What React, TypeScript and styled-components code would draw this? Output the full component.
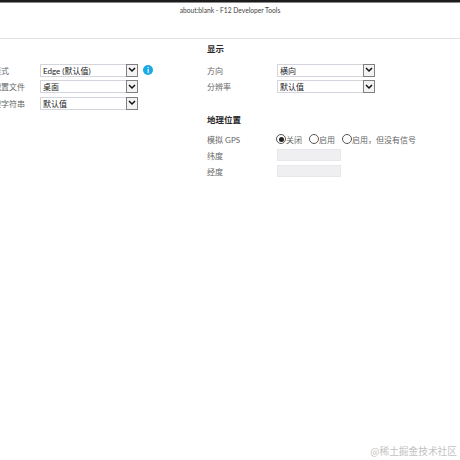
import React from 'react';
import styled, { createGlobalStyle } from 'styled-components';

const GlobalStyle = createGlobalStyle`
  html, body {
    margin: 0;
    padding: 0;
    background: #ffffff;
  }
  body {
    font-family: Lato, 'Noto Sans CJK SC', sans-serif;
  }
`;

const Page = styled.div`
  position: relative;
  width: 460px;
  height: 460px;
  overflow: hidden;
  background: #ffffff;
`;

const TopEdge = styled.div`
  height: 2px;
  background: #1c1c1c;
  border-bottom: 1px solid #8a8a8a;
`;

const TitleBar = styled.div`
  height: 36px;
  padding-top: 2px;
  box-sizing: border-box;
  border-bottom: 1px solid #e2e2e6;
  text-align: center;
  font-size: 6.7px;
  line-height: 10px;
  color: #444444;
`;

const Columns = styled.div`
  display: flex;
  margin-left: -31px;
  padding-top: 4px;
`;

const Column = styled.div<{ $width: number; $top?: number }>`
  width: ${({ $width }) => $width}px;
  padding-top: ${({ $top }) => $top ?? 0}px;
  flex: none;
`;

const Section = styled.section`
  margin-bottom: 19px;
`;

const Heading = styled.h3<{ $gap?: number }>`
  margin: 0 0 ${({ $gap }) => $gap ?? 7}px;
  height: 12px;
  font-size: 8.5px;
  line-height: 12px;
  font-weight: 700;
  color: #2a2a2a;
`;

const Row = styled.div<{ $height?: number }>`
  display: flex;
  align-items: center;
  height: ${({ $height }) => $height ?? 16.5}px;
`;

const Label = styled.span<{ $width: number }>`
  width: ${({ $width }) => $width}px;
  flex: none;
  font-size: 8px;
  color: #666666;
  white-space: nowrap;
`;

const Select = styled.div`
  display: flex;
  align-items: center;
  justify-content: space-between;
  width: 98px;
  height: 13px;
  box-sizing: border-box;
  border: 1px solid #d4d4dc;
  padding-left: 2px;
  font-size: 8px;
  color: #222222;
  white-space: nowrap;
`;

const Arrow = styled.span`
  display: flex;
  align-items: center;
  justify-content: center;
  width: 12px;
  height: 13px;
  margin-right: -1px;
  box-sizing: border-box;
  border: 1px solid #808080;
  background: #f2f2f2;
`;

const InfoBadge = styled.span`
  display: flex;
  align-items: center;
  justify-content: center;
  width: 10px;
  height: 10px;
  margin-left: 5px;
  border-radius: 50%;
  background: #19a9e5;
  color: #ffffff;
  font-size: 8px;
  font-weight: 700;
  line-height: 10px;
`;

const RadioGroup = styled.div`
  display: flex;
  gap: 7px;
`;

const RadioOption = styled.span`
  display: flex;
  align-items: center;
  font-size: 8px;
  color: #666666;
  white-space: nowrap;
`;

const RadioMark = styled.span<{ $checked?: boolean }>`
  display: flex;
  align-items: center;
  justify-content: center;
  width: 10px;
  height: 10px;
  box-sizing: border-box;
  border: 1px solid #555555;
  border-radius: 50%;

  &::after {
    content: '';
    width: 5px;
    height: 5px;
    border-radius: 50%;
    background: ${({ $checked }) => ($checked ? '#222222' : 'transparent')};
  }
`;

const DisabledInput = styled.div`
  width: 64px;
  height: 12px;
  box-sizing: border-box;
  border: 1px solid #e8e8ec;
  background: #efeff2;
`;

const Watermark = styled.div`
  position: absolute;
  right: 3px;
  top: 444px;
  font-size: 9.7px;
  line-height: 14px;
  font-family: 'Noto Sans CJK SC', sans-serif;
  color: #c2c2c2;
`;

function SelectBox({ value }: { value: string }) {
  return (
    <Select>
      {value}
      <Arrow>
        <svg width="8" height="6" viewBox="0 0 8 6">
          <path d="M1 1l3 3 3-3" fill="none" stroke="#111" strokeWidth="1.5" />
        </svg>
      </Arrow>
    </Select>
  );
}

export default function App() {
  return (
    <Page>
      <GlobalStyle />
      <TopEdge />
      <TitleBar>about:blank - F12 Developer Tools</TitleBar>
      <Columns>
        <Column $width={238} $top={19}>
          <Section>
            <Row>
              <Label $width={71}>浏览器模式</Label>
              <SelectBox value="Edge (默认值)" />
              <InfoBadge>i</InfoBadge>
            </Row>
            <Row>
              <Label $width={71}>浏览器配置文件</Label>
              <SelectBox value="桌面" />
            </Row>
            <Row>
              <Label $width={71}>用户代理字符串</Label>
              <SelectBox value="默认值" />
            </Row>
          </Section>
        </Column>
        <Column $width={253}>
          <Section>
            <Heading>显示</Heading>
            <Row>
              <Label $width={70}>方向</Label>
              <SelectBox value="横向" />
            </Row>
            <Row>
              <Label $width={70}>分辨率</Label>
              <SelectBox value="默认值" />
            </Row>
          </Section>
          <Section>
            <Heading $gap={5}>地理位置</Heading>
            <Row $height={16}>
              <Label $width={69}>模拟 GPS</Label>
              <RadioGroup>
                <RadioOption><RadioMark $checked />关闭</RadioOption>
                <RadioOption><RadioMark />启用</RadioOption>
                <RadioOption><RadioMark />启用，但没有信号</RadioOption>
              </RadioGroup>
            </Row>
            <Row $height={16}>
              <Label $width={70}>纬度</Label>
              <DisabledInput />
            </Row>
            <Row $height={16}>
              <Label $width={70}>经度</Label>
              <DisabledInput />
            </Row>
          </Section>
        </Column>
      </Columns>
      <Watermark>@稀土掘金技术社区</Watermark>
    </Page>
  );
}
